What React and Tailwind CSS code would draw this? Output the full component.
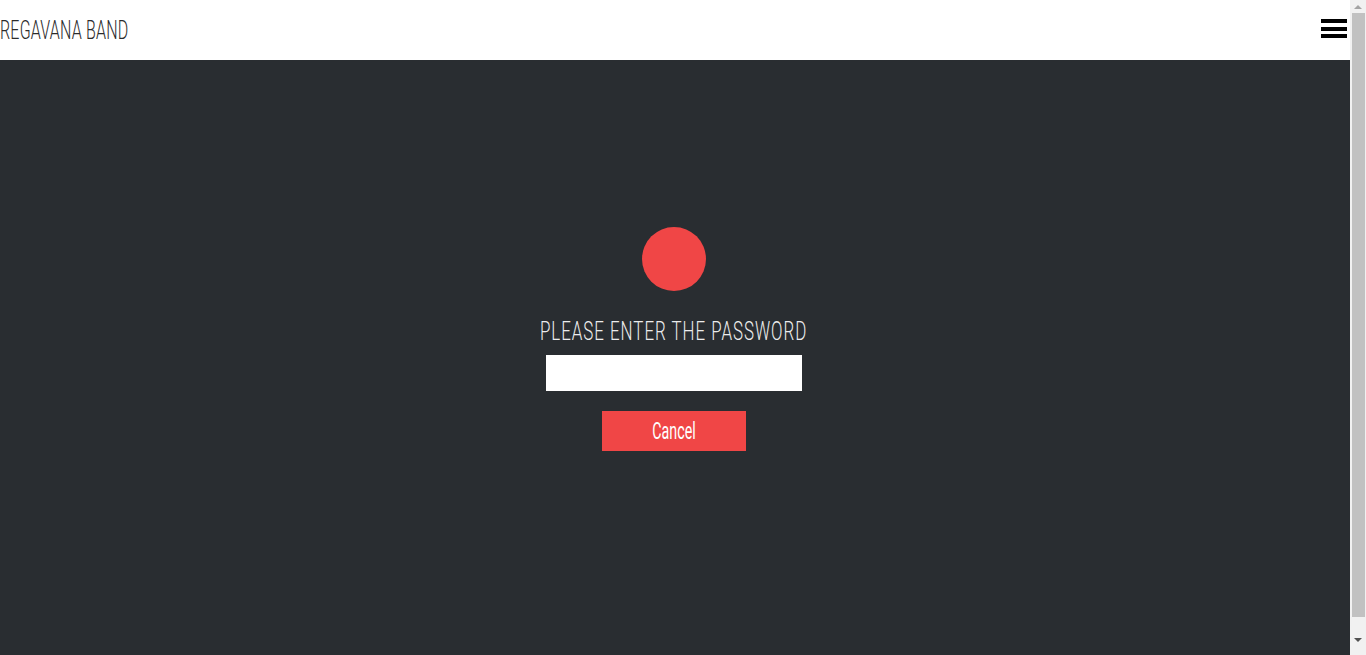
import React from 'react';

const thin = { fontFamily: 'Roboto, "Liberation Sans", sans-serif' };

// the browser's own scrollbar in the shot: drawn as a plain strip
function Scrollbar() {
  return (
    <aside className="w-[16px] h-full bg-[#f1f1f1] flex flex-col items-center shrink-0">
      <div className="h-[13px] w-full flex items-center justify-center">
        <span className="w-0 h-0 border-l-[4px] border-r-[4px] border-b-[4px] border-l-transparent border-r-transparent border-b-[#a3a3a3]" />
      </div>
      <div className="w-[13px] h-[604px] bg-[#c1c1c1] ml-[1px]" />
      <div className="flex-1 w-full flex items-center justify-center pt-[8px]">
        <span className="w-0 h-0 border-l-[4px] border-r-[4px] border-t-[4px] border-l-transparent border-r-transparent border-t-[#505050]" />
      </div>
    </aside>
  );
}

export default function App() {
  return (
    <div className="h-[655px] flex overflow-hidden" style={thin}>
      <div className="flex-1 flex flex-col bg-[#292d31]">
        {/* header */}
        <header className="h-[60px] shrink-0 bg-white flex items-center justify-between">
          <span className="inline-block origin-left scale-x-[0.64] text-[25px] leading-none font-light text-[#2b2b2b] tracking-[0.3px] whitespace-nowrap pt-[1px]">
            REGAVANA BAND
          </span>
          <button className="w-[26px] h-[19px] flex flex-col justify-between mr-[3px] mb-[3px]" aria-label="menu">
            <span className="block h-[4px] bg-black" />
            <span className="block h-[4px] bg-black" />
            <span className="block h-[4px] bg-black" />
          </button>
        </header>

        {/* password panel */}
        <main className="flex-1 flex flex-col items-center pt-[167px] pr-[2px]">
          <div className="w-[64px] h-[64px] rounded-full bg-[#f04646]" />
          <h1 className="mt-[27px] inline-block scale-x-[0.65] text-[26px] leading-none font-light text-[#ececec] tracking-[1.5px] whitespace-nowrap">
            PLEASE ENTER THE PASSWORD
          </h1>
          <input type="password" className="mt-[11px] w-[256px] h-[36px] bg-white outline-none border-0" />
          <button className="mt-[20px] w-[144px] h-[40px] bg-[#f04646] flex items-center justify-center">
            <span className="inline-block scale-x-[0.62] text-white text-[23px] leading-none whitespace-nowrap">Cancel</span>
          </button>
        </main>
      </div>
      <Scrollbar />
    </div>
  );
}
